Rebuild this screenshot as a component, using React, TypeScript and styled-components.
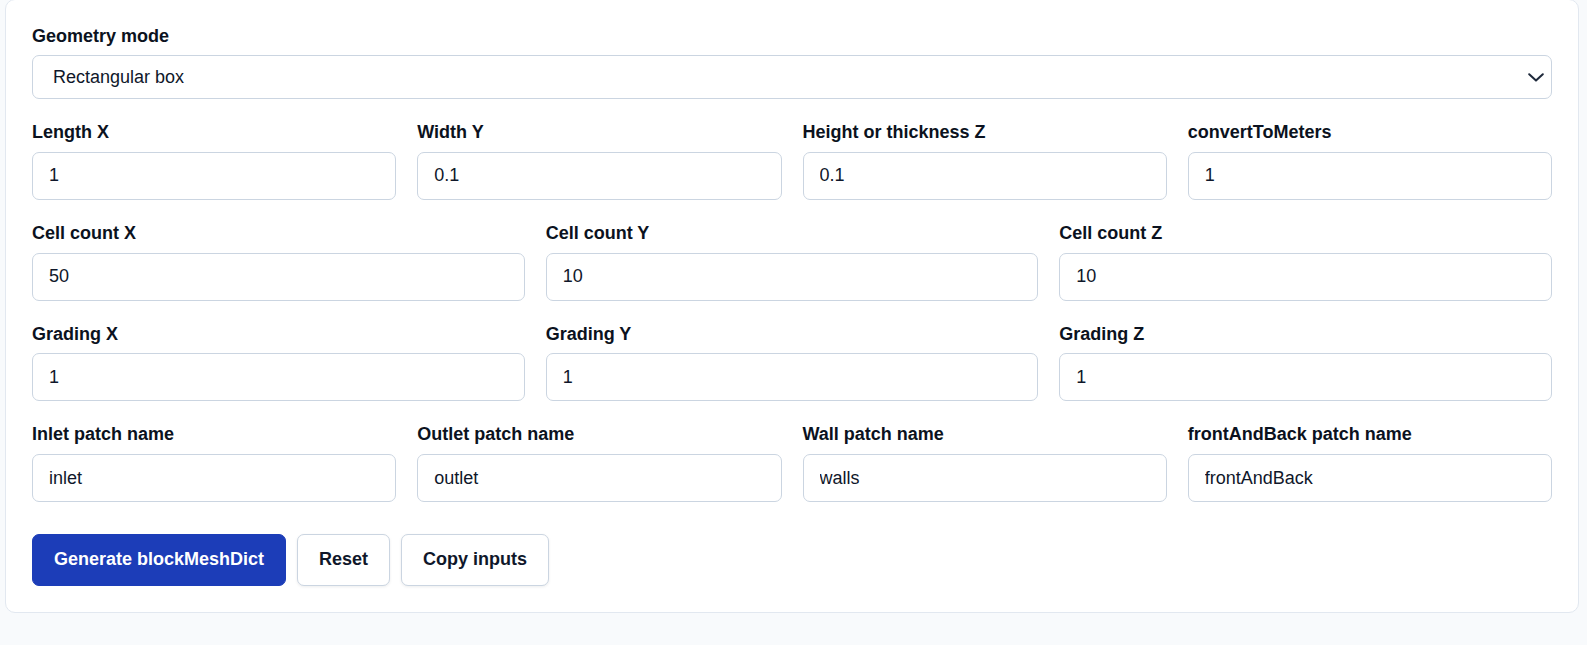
import { FunctionComponent, useState } from "react";
import styled, { createGlobalStyle } from "styled-components";

interface FieldDef {
  key: string;
  label: string;
}

const sizeFields: FieldDef[] = [
  { key: "lx", label: "Length X" },
  { key: "ly", label: "Width Y" },
  { key: "lz", label: "Height or thickness Z" },
  { key: "scale", label: "convertToMeters" },
];

const cellFields: FieldDef[] = [
  { key: "nx", label: "Cell count X" },
  { key: "ny", label: "Cell count Y" },
  { key: "nz", label: "Cell count Z" },
];

const gradingFields: FieldDef[] = [
  { key: "gx", label: "Grading X" },
  { key: "gy", label: "Grading Y" },
  { key: "gz", label: "Grading Z" },
];

const patchFields: FieldDef[] = [
  { key: "inlet", label: "Inlet patch name" },
  { key: "outlet", label: "Outlet patch name" },
  { key: "walls", label: "Wall patch name" },
  { key: "frontAndBack", label: "frontAndBack patch name" },
];

const defaults: Record<string, string> = {
  lx: "1",
  ly: "0.1",
  lz: "0.1",
  scale: "1",
  nx: "50",
  ny: "10",
  nz: "10",
  gx: "1",
  gy: "1",
  gz: "1",
  inlet: "inlet",
  outlet: "outlet",
  walls: "walls",
  frontAndBack: "frontAndBack",
};

const App: FunctionComponent = () => {
  const [values, setValues] = useState<Record<string, string>>(defaults);
  const [mode, setMode] = useState("box");

  const update = (key: string, value: string) =>
    setValues((prev) => ({ ...prev, [key]: value }));

  const renderRow = (fields: FieldDef[]) => (
    <Row cols={fields.length}>
      {fields.map((f) => (
        <Field key={f.key}>
          <Label htmlFor={f.key}>{f.label}</Label>
          <Input
            id={f.key}
            value={values[f.key]}
            onChange={(e) => update(f.key, e.target.value)}
          />
        </Field>
      ))}
    </Row>
  );

  return (
    <>
      <GlobalStyle />
      <Page>
        <Card>
          <Stack>
            <Field>
              <Label htmlFor="mode">Geometry mode</Label>
              <SelectWrap>
                <Select
                  id="mode"
                  value={mode}
                  onChange={(e) => setMode(e.target.value)}
                >
                  <option value="box">Rectangular box</option>
                  <option value="channel">2D channel</option>
                </Select>
                <Chevron width="16" height="9" viewBox="0 0 16 9">
                  <polyline
                    points="1.2,1.2 8,7.6 14.8,1.2"
                    fill="none"
                    stroke="#1e293b"
                    strokeWidth="2"
                    strokeLinecap="round"
                    strokeLinejoin="round"
                  />
                </Chevron>
              </SelectWrap>
            </Field>
            {renderRow(sizeFields)}
            {renderRow(cellFields)}
            {renderRow(gradingFields)}
            {renderRow(patchFields)}
            <Actions>
              <Button variant="primary">Generate blockMeshDict</Button>
              <Button onClick={() => setValues(defaults)}>Reset</Button>
              <Button>Copy inputs</Button>
            </Actions>
          </Stack>
        </Card>
      </Page>
    </>
  );
};

export default App;

const GlobalStyle = createGlobalStyle`
  html, body {
    margin: 0;
    background: #f8fafc;
  }
  body {
    font-family: "Liberation Sans", Arial, sans-serif;
    color: #0f172a;
  }
  * {
    box-sizing: border-box;
  }
`;

const Page = styled.div`
  min-height: 645px;
  padding: 0 8px 0 5px;
  overflow: hidden;
`;

const Card = styled.section`
  margin-top: -1.5px;
  background: #ffffff;
  border: 1px solid #e2e8f0;
  border-radius: 10px;
  padding: 26px;
`;

const Stack = styled.div`
  display: flex;
  flex-direction: column;
  gap: 23px;
`;

const Row = styled.div<{ cols: number }>`
  display: grid;
  grid-template-columns: repeat(${(p) => p.cols}, minmax(0, 1fr));
  column-gap: 21px;
`;

const Field = styled.div`
  display: flex;
  flex-direction: column;
`;

const Label = styled.label`
  font-size: 18px;
  line-height: 20.7px;
  font-weight: 700;
  color: #0b1220;
  margin-bottom: 9px;
`;

const Input = styled.input`
  height: 48px;
  width: 100%;
  padding: 0 16px;
  border: 1px solid #cbd5e1;
  border-radius: 7px;
  background: #ffffff;
  font-family: "Liberation Sans", Arial, sans-serif;
  font-size: 18px;
  color: #0f172a;
  outline: none;
`;

const SelectWrap = styled.div`
  position: relative;
`;

const Select = styled.select`
  appearance: none;
  width: 100%;
  height: 44px;
  padding: 0 40px 0 20px;
  border: 1px solid #cbd5e1;
  border-radius: 7px;
  background: #ffffff;
  font-family: "Liberation Sans", Arial, sans-serif;
  font-size: 18px;
  color: #0f172a;
  outline: none;
`;

const Chevron = styled.svg`
  position: absolute;
  right: 8px;
  top: 18px;
  pointer-events: none;
`;

const Actions = styled.div`
  display: flex;
  gap: 11px;
  margin-top: 8.5px;
`;

const Button = styled.button<{ variant?: "primary" }>`
  height: 52px;
  padding: 0 21px;
  border-radius: 7px;
  font-family: "Liberation Sans", Arial, sans-serif;
  font-size: 18px;
  font-weight: 700;
  cursor: pointer;
  border: 1px solid
    ${(p) => (p.variant === "primary" ? "#1c3db8" : "#cbd5e1")};
  background: ${(p) => (p.variant === "primary" ? "#1c3db8" : "#ffffff")};
  color: ${(p) => (p.variant === "primary" ? "#ffffff" : "#0f172a")};
  box-shadow: ${(p) =>
    p.variant === "primary" ? "none" : "0 1px 3px rgba(15, 23, 42, 0.08)"};
`;
